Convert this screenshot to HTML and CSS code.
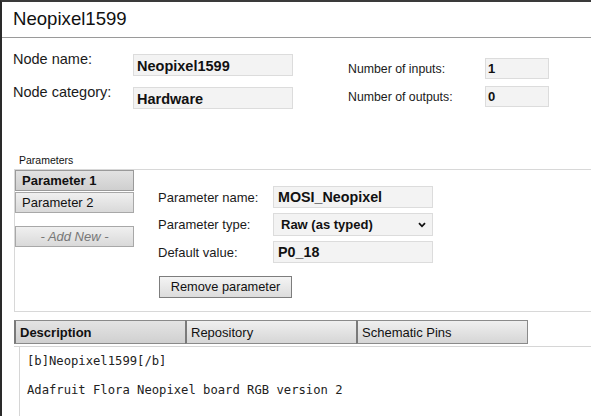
FILE: index.html
```html
<!DOCTYPE html>
<html>
<head>
<meta charset="utf-8">
<title>Neopixel1599</title>
<link rel="stylesheet" href="styles.css">
</head>
<body>
<div class="window">
  <div class="title">Neopixel1599</div>

  <div class="node-section">
    <div class="node-left">
      <div class="lbl lbl-big">Node name:</div>
      <div class="field field-big">Neopixel1599</div>
      <div class="lbl lbl-big">Node category:</div>
      <div class="field field-big">Hardware</div>
    </div>
    <div class="node-right">
      <div class="lbl-small">Number of inputs:</div>
      <div class="field field-small">1</div>
      <div class="lbl-small">Number of outputs:</div>
      <div class="field field-small">0</div>
    </div>
  </div>

  <div class="params-label">Parameters</div>
  <div class="params-panel">
    <div class="param-tabs">
      <div class="ptab ptab-active">Parameter 1</div>
      <div class="ptab">Parameter 2</div>
      <div class="ptab ptab-add">- Add New -</div>
    </div>
    <div class="param-form">
      <div class="form-grid">
        <div class="flbl">Parameter name:</div>
        <div class="field field-param">MOSI_Neopixel</div>
        <div class="flbl">Parameter type:</div>
        <div class="field field-param select">
          <span>Raw (as typed)</span>
          <svg class="chev" width="8" height="6" viewBox="0 0 8 6"><path d="M1 1.2 L4 4.3 L7 1.2" fill="none" stroke="#111" stroke-width="1.8"/></svg>
        </div>
        <div class="flbl">Default value:</div>
        <div class="field field-param">P0_18</div>
      </div>
      <div class="btn">Remove parameter</div>
    </div>
  </div>

  <div class="tabs">
    <div class="tab tab-active">Description</div>
    <div class="tab">Repository</div>
    <div class="tab tab-last">Schematic Pins</div>
  </div>
  <div class="tab-content">
    <div class="desc">
<pre class="mono">[b]Neopixel1599[/b]

Adafruit Flora Neopixel board RGB version 2</pre>
    </div>
  </div>
</div>
</body>
</html>
```

FILE: styles.css
```css
html, body {
  margin: 0;
  padding: 0;
  background: #ffffff;
  overflow: hidden;
}

body {
  width: 591px;
  height: 416px;
  font-family: "Liberation Sans", Arial, sans-serif;
  color: #1a1a1a;
}

.window {
  width: 591px;
  height: 416px;
  border-top: 2px solid #3a3a3a;
  border-left: 2px solid #2a2a2a;
  box-sizing: border-box;
  overflow: hidden;
}

.title {
  height: 36px;
  box-sizing: border-box;
  padding: 6px 0 0 11px;
  font-size: 18.6px;
  line-height: 22px;
  color: #111;
  border-bottom: 1px solid #9a9a9a;
}

.node-section {
  display: flex;
  align-items: flex-start;
  padding: 16px 0 0 11px;
  height: 115px;
  box-sizing: border-box;
}

.node-left {
  display: grid;
  grid-template-columns: 120px 160px;
  row-gap: 11px;
  align-items: start;
}

.lbl-big {
  font-size: 14.5px;
  line-height: 16px;
  margin-top: -3px;
  color: #1a1a1a;
}

.field {
  background: #f3f3f3;
  border: 1px solid #dcdcdc;
  box-sizing: border-box;
  font-weight: bold;
  color: #111;
}

.field-big {
  height: 22px;
  font-size: 14.5px;
  line-height: 20px;
  padding-left: 3px;
  padding-top: 1px;
}

.node-right {
  display: grid;
  grid-template-columns: 137px 64px;
  row-gap: 7px;
  align-items: center;
  margin-left: 55px;
  margin-top: 4px;
}

.lbl-small {
  font-size: 12.3px;
  line-height: 14px;
  color: #1a1a1a;
}

.field-small {
  height: 21px;
  font-size: 13px;
  line-height: 19px;
  padding-left: 2px;
}

.params-label {
  font-size: 10.5px;
  line-height: 13px;
  height: 13px;
  padding-left: 17px;
  margin-top: 1px;
  color: #111;
}

.params-panel {
  margin: 2px 0 0 12px;
  border-top: 1px solid #d8d8d8;
  border-left: 1px solid #d8d8d8;
  border-bottom: 1px solid #d8d8d8;
  display: flex;
  align-items: flex-start;
  height: 143px;
  box-sizing: border-box;
}

.param-tabs {
  display: flex;
  flex-direction: column;
  gap: 1px;
  width: 119px;
}

.ptab {
  height: 21px;
  box-sizing: border-box;
  border: 1px solid #a8a8a8;
  background: linear-gradient(#f0f0f0, #d9d9d9);
  font-size: 13px;
  line-height: 19px;
  padding-left: 6px;
  color: #111;
}

.ptab-active {
  font-weight: bold;
  background: linear-gradient(#e2e2e2, #cfcfcf);
  border-color: #9a9a9a;
}

.ptab-add {
  margin-top: 12px;
  text-align: center;
  font-style: italic;
  color: #777;
  padding-left: 0;
}

.param-form {
  margin-left: 24px;
  padding-top: 16px;
}

.form-grid {
  display: grid;
  grid-template-columns: 115px 160px;
  row-gap: 5px;
  align-items: center;
}

.flbl {
  font-size: 13px;
  line-height: 15px;
  color: #1a1a1a;
}

.field-param {
  height: 22px;
  font-size: 14.3px;
  line-height: 20px;
  padding-left: 4px;
}

.select {
  height: 23px;
  display: flex;
  align-items: center;
  justify-content: space-between;
  padding: 0 6px 0 7px;
  font-size: 13px;
}

.chev {
  display: block;
}

.btn {
  margin-top: 13px;
  margin-left: 1px;
  width: 133px;
  height: 22px;
  box-sizing: border-box;
  border: 1px solid #7d7d7d;
  background: linear-gradient(#f4f4f4, #dcdcdc);
  font-size: 12.8px;
  line-height: 20px;
  text-align: center;
  color: #111;
}

.tabs {
  display: flex;
  margin: 8px 0 0 12px;
  height: 24px;
}

.tab {
  width: 171px;
  height: 24px;
  box-sizing: border-box;
  border-top: 1px solid #8a8a8a;
  border-bottom: 1px solid #8a8a8a;
  border-left: 2px solid #7a7a7a;
  background: linear-gradient(#efefef, #d6d6d6);
  font-size: 13px;
  line-height: 23px;
  padding-left: 4px;
  color: #111;
}

.tab-active {
  font-weight: bold;
  background: linear-gradient(#e4e4e4, #d0d0d0);
}

.tab-last {
  border-right: 1px solid #8a8a8a;
  width: 172px;
}

.tab-content {
  margin: 2px 0 0 12px;
  border-top: 1px solid #d6d6d6;
  padding-left: 5px;
}

.desc {
  border-left: 1px solid #d6d6d6;
  padding: 7px 0 0 7px;
  height: 80px;
}

.mono {
  margin: 0;
  font-family: "DejaVu Sans Mono", "Liberation Mono", monospace;
  font-size: 12.2px;
  line-height: 14.5px;
  color: #222;
}
```
